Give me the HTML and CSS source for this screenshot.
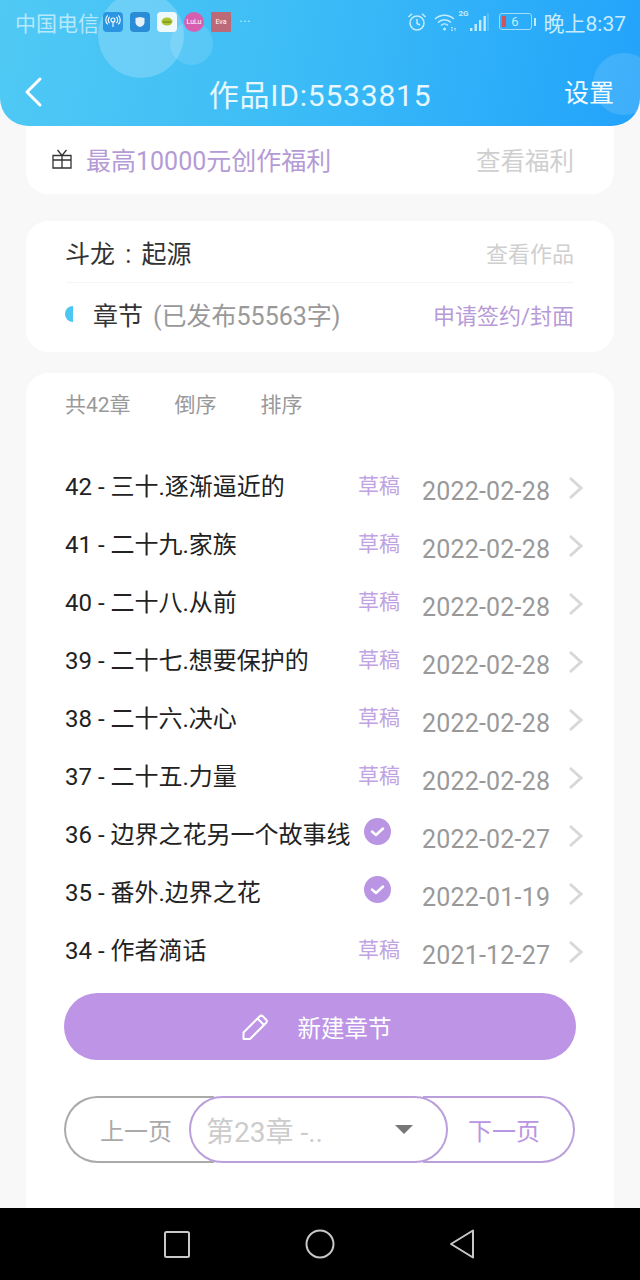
FILE: index.html
```html
<!DOCTYPE html>
<html>

<head>
  <meta charset="utf-8">
  <title>作品ID:5533815</title>
  <link rel="stylesheet" href="styles.css">
</head>

<body>
  <div class="page">
    <div class="header">
      <div class="bubble bubble-big"></div>
      <div class="bubble bubble-small"></div>
      <div class="bubble bubble-right"></div>

      <div class="status-bar">
        <div class="status-left">
          <span class="carrier">中国电信</span>
          <span class="app-icon app-wifi">
            <svg width="16" height="16" viewBox="0 0 16 16" fill="none" stroke="#fff" stroke-width="1.1"><circle cx="8" cy="6" r="2"/><path d="M8 8v5M4.6 9a4 4 0 0 1 0-6M11.4 3a4 4 0 0 1 0 6M2.8 10.4a6 6 0 0 1 0-9M13.2 1.4a6 6 0 0 1 0 9"/></svg>
          </span>
          <span class="app-icon app-shield">
            <svg width="12" height="12" viewBox="0 0 12 12"><path d="M1.5 2 6 1l4.500 1v4.500C10.500 9 8 10.500 6 11 4 10.500 1.500 9 1.500 6.500z" fill="#e4f1fa"/></svg>
          </span>
          <span class="app-icon app-chat">
            <svg width="14" height="12" viewBox="0 0 14 12"><ellipse cx="7" cy="5.500" rx="5.500" ry="4" fill="#a9c42c"/><path d="M3 6h8" stroke="#6b7a20" stroke-width="1"/></svg>
          </span>
          <span class="app-icon app-lulu">LuLu</span>
          <span class="app-icon app-eva">Eva</span>
          <span class="more">···</span>
        </div>
        <div class="status-right">
          <svg class="st-alarm" width="22" height="22" viewBox="0 0 22 22" fill="none" stroke="#c6ecfb" stroke-width="1.500"><circle cx="11" cy="12" r="7"/><path d="M11 8v4.500l3 1.500M2.500 6 6 2.800M19.500 6 16 2.800"/></svg>
          <svg class="st-wifi" width="24" height="20" viewBox="0 0 24 20" fill="none" stroke="#c6ecfb" stroke-width="1.500"><path d="M2 7a14 14 0 0 1 19 0M5 10.500a9 9 0 0 1 13 0M8 13.500a5 5 0 0 1 7 0"/><circle cx="11.500" cy="17" r="1.500" fill="#c6ecfb" stroke="none"/><path d="M19 15v4M22 16v3" stroke-dasharray="1.500 1"/></svg>
          <span class="st-signal">
            <span class="st-net">2G</span>
            <svg width="20" height="20" viewBox="0 0 20 20" fill="#c6ecfb"><rect x="1" y="16" width="2.400" height="3"/><rect x="5.500" y="12" width="2.400" height="7"/><rect x="10" y="8" width="2.400" height="11"/><rect x="14.500" y="4" width="2.400" height="15"/><rect x="18.500" y="1" width="1" height="18" opacity=".5"/></svg>
          </span>
          <span class="st-battery"><span class="st-level"></span><span class="st-num">6</span></span>
          <span class="st-cap"></span>
          <span class="st-time">晚上8:37</span>
        </div>
      </div>

      <div class="nav">
        <svg class="nav-back" width="20" height="32" viewBox="0 0 20 32" fill="none" stroke="#fff" stroke-width="3" stroke-linecap="round" stroke-linejoin="round"><path d="M17 3 4 16l13 13"/></svg>
        <div class="nav-title">作品ID:5533815</div>
        <div class="nav-action">设置</div>
      </div>
    </div>

    <div class="content">
      <div class="card card-welfare">
        <svg class="gift" width="22" height="22" viewBox="0 0 22 22" fill="none" stroke="#333" stroke-width="1.300"><path d="M2 7.500h18v12.500H2zM11 7.500V20M2 12h18M6.500 2 11 7.500 15.500 2"/></svg>
        <span class="welfare-text">最高10000元创作福利</span>
        <span class="welfare-link">查看福利</span>
      </div>

      <div class="card card-book">
        <div class="book-row">
          <span class="book-name">斗龙 : 起源</span>
          <span class="book-link">查看作品</span>
        </div>
        <div class="book-row book-row-chapters">
          <span class="half-dot"></span>
          <span class="chapters-label">章节</span>
          <span class="chapters-count">(已发布55563字)</span>
          <span class="chapters-link">申请签约/封面</span>
        </div>
      </div>

      <div class="card card-list">
        <div class="list-tools">
          <span>共42章</span>
          <span>倒序</span>
          <span>排序</span>
        </div>

        <div class="chapter-list">
          <div class="chapter">
            <span class="chapter-title">42 - 三十.逐渐逼近的</span>
            <span class="tag">草稿</span>
            <span class="date">2022-02-28</span>
            <svg class="chev" width="16" height="24" viewBox="0 0 16 24"><path d="M2 2l11 10L2 22" fill="none" stroke="#d8d8d8" stroke-width="3"/></svg>
          </div>
          <div class="chapter">
            <span class="chapter-title">41 - 二十九.家族</span>
            <span class="tag">草稿</span>
            <span class="date">2022-02-28</span>
            <svg class="chev" width="16" height="24" viewBox="0 0 16 24"><path d="M2 2l11 10L2 22" fill="none" stroke="#d8d8d8" stroke-width="3"/></svg>
          </div>
          <div class="chapter">
            <span class="chapter-title">40 - 二十八.从前</span>
            <span class="tag">草稿</span>
            <span class="date">2022-02-28</span>
            <svg class="chev" width="16" height="24" viewBox="0 0 16 24"><path d="M2 2l11 10L2 22" fill="none" stroke="#d8d8d8" stroke-width="3"/></svg>
          </div>
          <div class="chapter">
            <span class="chapter-title">39 - 二十七.想要保护的</span>
            <span class="tag">草稿</span>
            <span class="date">2022-02-28</span>
            <svg class="chev" width="16" height="24" viewBox="0 0 16 24"><path d="M2 2l11 10L2 22" fill="none" stroke="#d8d8d8" stroke-width="3"/></svg>
          </div>
          <div class="chapter">
            <span class="chapter-title">38 - 二十六.决心</span>
            <span class="tag">草稿</span>
            <span class="date">2022-02-28</span>
            <svg class="chev" width="16" height="24" viewBox="0 0 16 24"><path d="M2 2l11 10L2 22" fill="none" stroke="#d8d8d8" stroke-width="3"/></svg>
          </div>
          <div class="chapter">
            <span class="chapter-title">37 - 二十五.力量</span>
            <span class="tag">草稿</span>
            <span class="date">2022-02-28</span>
            <svg class="chev" width="16" height="24" viewBox="0 0 16 24"><path d="M2 2l11 10L2 22" fill="none" stroke="#d8d8d8" stroke-width="3"/></svg>
          </div>
          <div class="chapter">
            <span class="chapter-title">36 - 边界之花另一个故事线</span>
            <svg class="check" width="27" height="27" viewBox="0 0 27 27"><circle cx="13.500" cy="13.500" r="13.500" fill="#b995e3"/><path d="M8 13.500l4 3.500 7-6.500" fill="none" stroke="#fff" stroke-width="2.500" stroke-linecap="round" stroke-linejoin="round"/></svg>
            <span class="date">2022-02-27</span>
            <svg class="chev" width="16" height="24" viewBox="0 0 16 24"><path d="M2 2l11 10L2 22" fill="none" stroke="#d8d8d8" stroke-width="3"/></svg>
          </div>
          <div class="chapter">
            <span class="chapter-title">35 - 番外.边界之花</span>
            <svg class="check" width="27" height="27" viewBox="0 0 27 27"><circle cx="13.500" cy="13.500" r="13.500" fill="#b995e3"/><path d="M8 13.500l4 3.500 7-6.500" fill="none" stroke="#fff" stroke-width="2.500" stroke-linecap="round" stroke-linejoin="round"/></svg>
            <span class="date">2022-01-19</span>
            <svg class="chev" width="16" height="24" viewBox="0 0 16 24"><path d="M2 2l11 10L2 22" fill="none" stroke="#d8d8d8" stroke-width="3"/></svg>
          </div>
          <div class="chapter">
            <span class="chapter-title">34 - 作者滴话</span>
            <span class="tag">草稿</span>
            <span class="date">2021-12-27</span>
            <svg class="chev" width="16" height="24" viewBox="0 0 16 24"><path d="M2 2l11 10L2 22" fill="none" stroke="#d8d8d8" stroke-width="3"/></svg>
          </div>
        </div>

        <div class="new-chapter">
          <svg width="28" height="28" viewBox="0 0 28 28" fill="none" stroke="#fff" stroke-width="2" stroke-linejoin="round"><path d="M2.500 26v-6.500L18.500 3.500a2.500 2.500 0 0 1 3.500 0l3 3a2.500 2.500 0 0 1 0 3.500L9 26zM16.500 5.500l6.500 6.500"/></svg>
          <span>新建章节</span>
        </div>

        <div class="pager">
          <div class="pager-prev">上一页</div>
          <div class="pager-select">
            <span class="pager-value">第23章 -..</span>
            <span class="pager-caret"></span>
          </div>
          <div class="pager-next">下一页</div>
        </div>
      </div>
    </div>

    <div class="android-nav">
      <svg width="28" height="28" viewBox="0 0 28 28" fill="none" stroke="#c8c8c8" stroke-width="2" stroke-linejoin="round"><rect x="2" y="2" width="24" height="25" rx="1.500"/></svg>
      <svg width="30" height="30" viewBox="0 0 30 30" fill="none" stroke="#c8c8c8" stroke-width="2"><circle cx="15" cy="15" r="13.500"/></svg>
      <svg width="26" height="30" viewBox="0 0 26 30" fill="none" stroke="#c8c8c8" stroke-width="2" stroke-linejoin="round"><path d="M24 1.500v27L2 15z"/></svg>
    </div>
  </div>
</body>

</html>
```

FILE: styles.css
```css
html,
body {
  margin: 0;
  padding: 0;
  background: #f8f8f8;
}

body * {
  box-sizing: border-box;
}

.page {
  display: flex;
  flex-direction: column;
  width: 640px;
  height: 1280px;
  overflow: hidden;
  font-family: Roboto, "Noto Sans CJK SC", sans-serif;
}

/* Header */
.header {
  position: relative;
  flex: none;
  height: 126px;
  overflow: hidden;
  color: #fff;
  background: linear-gradient(100deg, #50c9f4 0%, #3dbdf6 45%, #22a3fb 100%);
  border-radius: 0 0 28px 28px;
}

.bubble {
  position: absolute;
  border-radius: 50%;
  background: rgba(255, 255, 255, 0.2);
}

.bubble-big {
  left: 98px;
  top: -8px;
  width: 86px;
  height: 86px;
}

.bubble-small {
  left: 170px;
  top: 22px;
  width: 43px;
  height: 43px;
  background: rgba(255, 255, 255, 0.12);
}

.bubble-right {
  left: 593px;
  top: 53px;
  width: 62px;
  height: 62px;
  background: rgba(255, 255, 255, 0.13);
}

.status-bar {
  position: relative;
  display: flex;
  align-items: center;
  justify-content: space-between;
  height: 43px;
  padding: 0 14px 0 15px;
}

.status-left,
.status-right {
  display: flex;
  align-items: center;
}

.carrier {
  width: 88px;
  font-size: 21px;
  color: #b7e8fb;
}

.app-icon {
  display: flex;
  align-items: center;
  justify-content: center;
  width: 20px;
  height: 20px;
  margin-right: 7px;
  border-radius: 4px;
  font-size: 7px;
  color: #fff;
}

.app-wifi {
  background: #2a95e2;
}

.app-shield {
  background: #2a8bd6;
}

.app-chat {
  background: #f0f8fa;
}

.app-lulu {
  border-radius: 50%;
  background: #d75fb0;
}

.app-eva {
  border-radius: 1px;
  background: #bd6a78;
}

.more {
  margin-left: 1px;
  font-size: 15px;
  color: #b7e8fb;
}

.st-alarm {
  margin-right: 5px;
}

.st-wifi {
  margin-right: 2px;
}

.st-signal {
  position: relative;
  width: 30px;
  display: flex;
  justify-content: flex-end;
  margin-right: 10px;
}

.st-net {
  position: absolute;
  left: 0;
  top: -3px;
  font-size: 8px;
  font-weight: 700;
  color: #c6ecfb;
}

.st-battery {
  position: relative;
  display: flex;
  align-items: center;
  justify-content: center;
  width: 33px;
  height: 17px;
  border: 1px solid #a5dcf5;
  border-radius: 3px;
}

.st-level {
  position: absolute;
  left: 2px;
  top: 2px;
  width: 4px;
  height: 11px;
  background: #d0535c;
}

.st-num {
  font-size: 13px;
  color: #c6ecfb;
}

.st-cap {
  width: 2px;
  height: 8px;
  margin: 0 8px 0 2px;
  background: #c6ecfb;
}

.st-time {
  font-size: 21px;
  color: #c6ecfb;
}

.nav {
  position: relative;
  display: flex;
  align-items: center;
  justify-content: center;
  height: 83px;
  padding-top: 17px;
}

.nav-back {
  position: absolute;
  left: 23px;
  top: 33px;
}

.nav-title {
  font-size: 30px;
  letter-spacing: 0.8px;
  color: #e6f7fe;
}

.nav-action {
  position: absolute;
  right: 26px;
  top: 30px;
  font-size: 25px;
  color: #f2fbff;
}

/* Cards */
.content {
  flex: 1;
  display: flex;
  flex-direction: column;
  padding: 0 26px;
  overflow: hidden;
}

.card {
  flex: none;
  background: #fff;
  border-radius: 22px;
}

.card-welfare {
  display: flex;
  align-items: center;
  height: 68px;
  margin-bottom: 27px;
  padding: 0 40px 2px 25px;
  border-radius: 0 0 22px 22px;
}

.gift {
  margin-right: 13px;
}

.welfare-text {
  flex: 1;
  font-size: 25px;
  color: #b49bd6;
}

.welfare-link {
  font-size: 24.500px;
  color: #cfcfcf;
}

.card-book {
  height: 131px;
  margin-bottom: 21px;
  padding: 0 40px;
}

.book-row {
  display: flex;
  align-items: center;
  height: 62px;
  border-bottom: 1px solid #f5f5f5;
}

.book-row-chapters {
  height: 67px;
  border-bottom: 0;
  padding-bottom: 5px;
}

.book-name {
  flex: 1;
  margin-left: -1px;
  font-size: 25px;
  word-spacing: 4px;
  color: #333;
}

.book-link {
  font-size: 22px;
  color: #cfcfcf;
}

.half-dot {
  width: 8px;
  height: 16px;
  margin-left: -1px;
  margin-right: 20px;
  background: #4cc6f2;
  border-radius: 8px 0 0 8px;
}

.chapters-label {
  margin-right: 10px;
  font-size: 25px;
  color: #333;
}

.chapters-count {
  flex: 1;
  font-size: 25px;
  color: #999;
}

.chapters-link {
  font-size: 22px;
  color: #b79ad8;
}

.card-list {
  flex: 1;
  padding: 0 38px 0 38px;
  border-radius: 22px 22px 0 0;
}

.list-tools {
  display: flex;
  gap: 44px;
  padding: 18px 0 0 1px;
  font-size: 21px;
  line-height: 28px;
  color: #999;
}

/* Chapter rows */
.chapter-list {
  margin-top: 36px;
}

.chapter {
  display: grid;
  grid-template-columns: 273px 42px 128px 16px;
  column-gap: 20px;
  align-items: center;
  height: 58px;
  margin-left: 1px;
}

.chapter-title {
  font-size: 24px;
  white-space: nowrap;
  color: #222;
}

.chapter .tag {
  font-size: 21px;
  color: #bfa3e2;
}

.chapter .check {
  justify-self: center;
  margin-top: -1px;
  margin-right: 4px;
}

.date {
  margin-left: 2px;
  margin-top: 15px;
  font-size: 25px;
  letter-spacing: 0.2px;
  white-space: nowrap;
  color: #999;
}

.chev {
  margin-top: 8px;
}

/* Buttons */
.new-chapter {
  display: flex;
  align-items: center;
  justify-content: center;
  gap: 29px;
  height: 67px;
  margin-top: 16px;
  padding-right: 8px;
  font-size: 23.500px;
  color: #fff;
  background: #bd94e6;
  border-radius: 34px;
}

.pager {
  display: flex;
  height: 67px;
  margin-top: 36px;
  font-size: 24px;
}

.pager-prev,
.pager-next {
  display: flex;
  align-items: center;
  flex: none;
  width: 150px;
  height: 67px;
  border: 2px solid #aaa;
}

.pager-prev {
  padding-left: 34px;
  color: #aaa;
  border-right: 0;
  border-radius: 34px 0 0 34px;
}

.pager-next {
  width: 152px;
  margin-left: -25px;
  padding-left: 45px;
  color: #b995e3;
  border-color: #bb9fdc;
  border-left: 0;
  border-radius: 0 34px 34px 0;
}

.pager-select {
  position: relative;
  z-index: 1;
  flex: none;
  display: flex;
  align-items: center;
  justify-content: space-between;
  width: 259px;
  height: 67px;
  margin-left: -25px;
  padding: 0 33px 0 15px;
  background: #fff;
  border: 2px solid #bb9fdc;
  border-radius: 34px;
}

.pager-value {
  font-size: 28px;
  color: #ccc;
}

.pager-caret {
  width: 0;
  height: 0;
  border-style: solid;
  border-width: 9px 9px 0 9px;
  border-color: #777 transparent transparent transparent;
}

/* Android navigation */
.android-nav {
  flex: none;
  display: flex;
  align-items: center;
  justify-content: center;
  gap: 114px;
  height: 72px;
  padding-right: 2px;
  background: #000;
}
```
